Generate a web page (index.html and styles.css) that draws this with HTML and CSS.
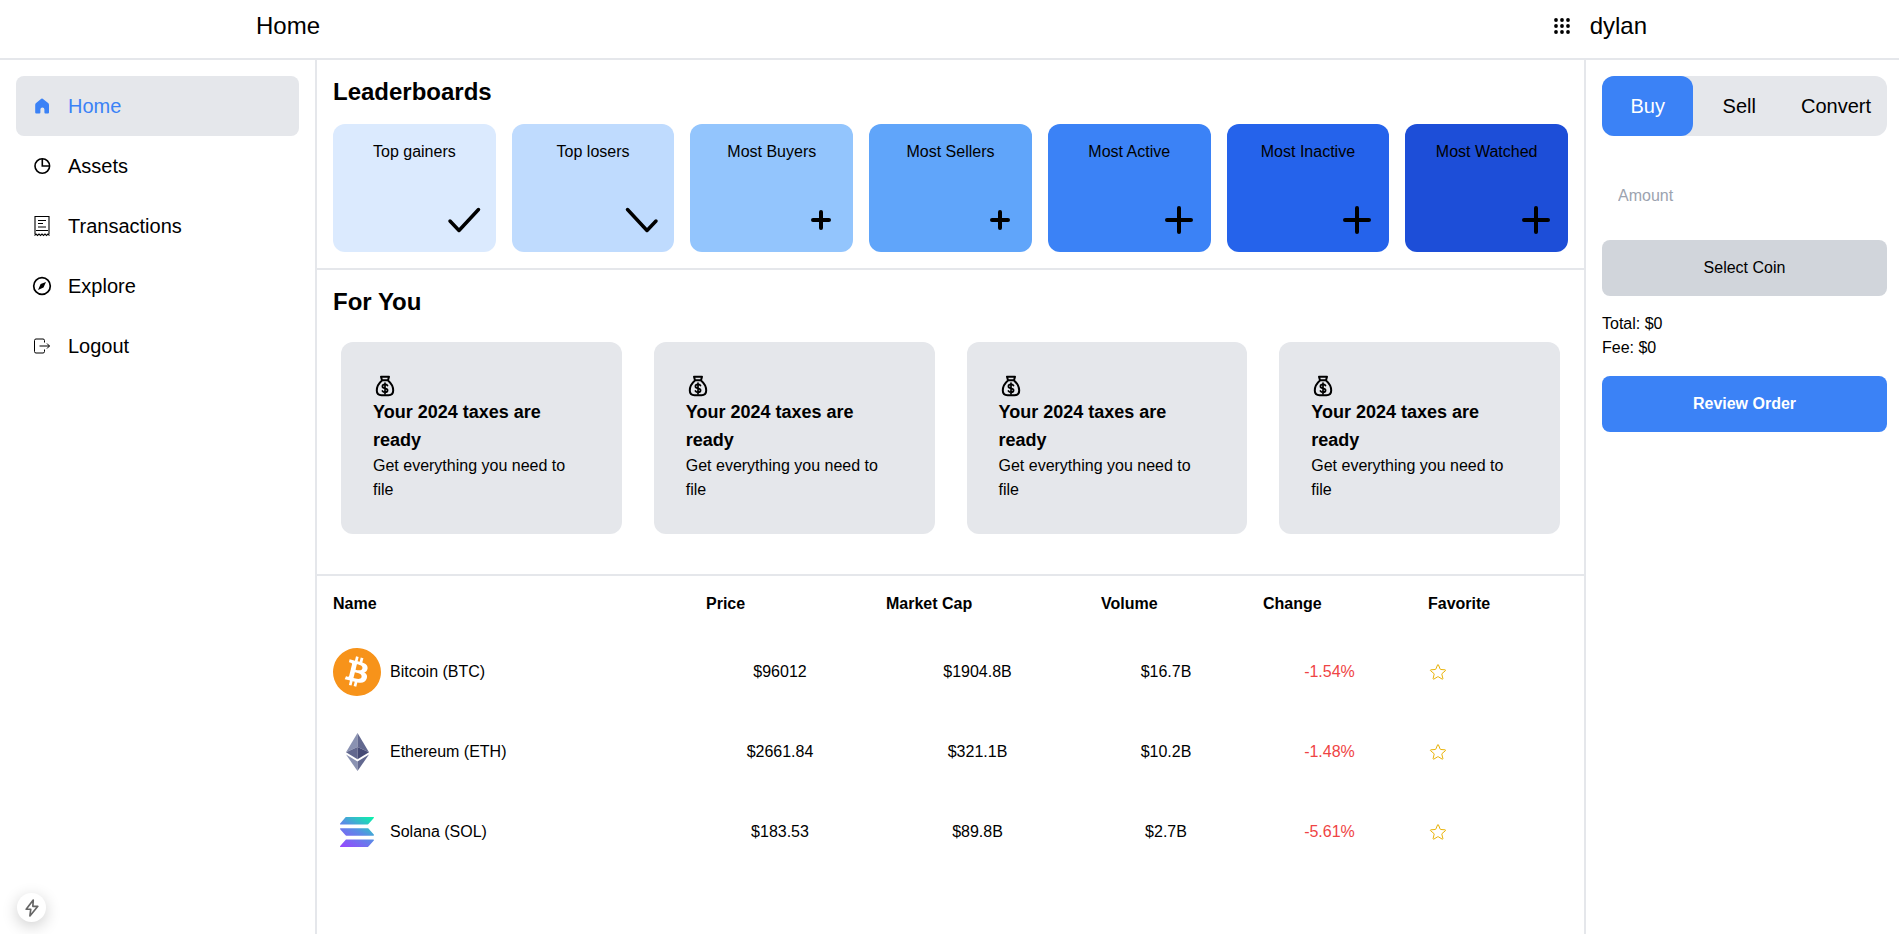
FILE: index.html
```html
<!DOCTYPE html>
<html lang="en">
<head>
    <meta charset="UTF-8">
    <meta name="viewport" content="width=device-width, initial-scale=1.0">
    <title>Home</title>
    <link rel="stylesheet" href="styles.css">
</head>
<body>
    <header class="topbar">
        <div class="topbar-title">Home</div>
        <div class="topbar-user">
            <svg class="apps-icon" viewBox="0 0 16 16" fill="#000">
                <circle cx="2" cy="2" r="1.9"/><circle cx="8" cy="2" r="1.9"/><circle cx="14" cy="2" r="1.9"/>
                <circle cx="2" cy="8" r="1.9"/><circle cx="8" cy="8" r="1.9"/><circle cx="14" cy="8" r="1.9"/>
                <circle cx="2" cy="14" r="1.9"/><circle cx="8" cy="14" r="1.9"/><circle cx="14" cy="14" r="1.9"/>
            </svg>
            <span>dylan</span>
        </div>
    </header>

    <div class="layout">
        <!-- Sidebar -->
        <nav class="sidebar">
            <a class="nav-link active">
                <svg class="nav-icon" viewBox="0 0 20 20" fill="#3b82f6"><path d="M9.3 2.8a1 1 0 0 1 1.4 0l5.4 4.3c.6.5.9 1.1.9 1.9V16.600a1 1 0 0 1-1 1h-2.600a1 1 0 0 1-1-1v-3.200a2 2 0 0 0-4 0v3.200a1 1 0 0 1-1 1H4.200a1 1 0 0 1-1-1V9c0-.8.3-1.4.9-1.9z"/></svg>
                <span>Home</span>
            </a>
            <a class="nav-link">
                <svg class="nav-icon" viewBox="0 0 20 20" fill="none" stroke="#000" stroke-width="1.6"><circle cx="10.300" cy="10" r="7.300"/><path d="M10.300 2.700V10h7.300"/></svg>
                <span>Assets</span>
            </a>
            <a class="nav-link">
                <svg class="nav-icon receipt-icon" viewBox="0 0 20 24" fill="none" stroke="#000" stroke-width="1.1"><path d="M3 20V2.500h14V20"/><path d="M6 6.500h8M6 9.500h5M6 13h8M4 16.500h12"/><path d="M2.500 21.500l1.500-1.500 1.500 1.500 1.500-1.500 1.500 1.500 1.500-1.500 1.500 1.500 1.500-1.500 1.500 1.500 1.500-1.500 1.500 1.500"/></svg>
                <span>Transactions</span>
            </a>
            <a class="nav-link">
                <svg class="nav-icon" viewBox="0 0 20 20" fill="none" stroke="#000" stroke-width="1.7"><circle cx="10" cy="10" r="8.300"/><path d="M14 6l-5.400 2.100L6 14l5.500-2.400z" fill="#000" stroke="none"/></svg>
                <span>Explore</span>
            </a>
            <a class="nav-link">
                <svg class="nav-icon" viewBox="0 0 20 20" fill="none" stroke="#000" stroke-width="1"><path d="M12.500 6.500V4.500a1.500 1.500 0 0 0-1.500-1.500H4A1.500 1.500 0 0 0 2.500 4.500v11A1.500 1.500 0 0 0 4 17h7a1.500 1.500 0 0 0 1.500-1.500v-2"/><path d="M7.500 10H17.500M15 7.500l2.500 2.500-2.500 2.500"/></svg>
                <span>Logout</span>
            </a>
        </nav>

        <main class="main">
            <!-- Leaderboards -->
            <section class="section">
                <h2>Leaderboards</h2>
                <div class="leaderboards">
                    <div class="board-card shade-1">
                        <span>Top gainers</span>
                        <svg class="board-icon" viewBox="0 0 48 48"><path d="M10 25l9 9.500L38.500 13.500"/></svg>
                    </div>
                    <div class="board-card shade-2">
                        <span>Top losers</span>
                        <svg class="board-icon" viewBox="0 0 48 48"><path d="M9.500 13.500L29 34.500l9-9.500"/></svg>
                    </div>
                    <div class="board-card shade-3">
                        <span>Most Buyers</span>
                        <svg class="board-icon bold" viewBox="0 0 48 48"><path d="M24 16v16M16 24h16"/></svg>
                    </div>
                    <div class="board-card shade-4">
                        <span>Most Sellers</span>
                        <svg class="board-icon bold" viewBox="0 0 48 48"><path d="M24 16v16M16 24h16"/></svg>
                    </div>
                    <div class="board-card shade-5">
                        <span>Most Active</span>
                        <svg class="board-icon bold" viewBox="0 0 48 48"><path d="M24 12v24M12 24h24"/></svg>
                    </div>
                    <div class="board-card shade-6">
                        <span>Most Inactive</span>
                        <svg class="board-icon bold" viewBox="0 0 48 48"><path d="M24 12v24M12 24h24"/></svg>
                    </div>
                    <div class="board-card shade-7">
                        <span>Most Watched</span>
                        <svg class="board-icon bold" viewBox="0 0 48 48"><path d="M24 12v24M12 24h24"/></svg>
                    </div>
                </div>
            </section>

            <!-- For You -->
            <section class="section">
                <h2>For You</h2>
                <div class="for-you">
                    <div class="tip-card">
                        <svg class="bag-icon" viewBox="0 0 24 24"><path d="M8 2.800h8l-1 3.400H9zM9 6.500C6 9 3.800 12.500 3.800 16.500c0 3 1.700 4.700 4.700 4.700h7c3 0 4.700-1.700 4.700-4.700 0-4-2.200-7.500-5.200-10"/><path class="thin" d="M14.500 11.500c-.6-.8-1.500-1.100-2.500-1.100-1.500 0-2.600.8-2.600 2 0 2.600 5.200 1.200 5.200 3.800 0 1.200-1.200 2-2.600 2-1.100 0-2-.4-2.600-1.200M12 9v11"/></svg>
                        <h3>Your 2024 taxes are ready</h3>
                        <p>Get everything you need to file</p>
                    </div>
                    <div class="tip-card">
                        <svg class="bag-icon" viewBox="0 0 24 24"><path d="M8 2.800h8l-1 3.400H9zM9 6.500C6 9 3.800 12.500 3.800 16.500c0 3 1.700 4.700 4.700 4.700h7c3 0 4.700-1.700 4.700-4.700 0-4-2.200-7.500-5.200-10"/><path class="thin" d="M14.500 11.500c-.6-.8-1.500-1.100-2.500-1.100-1.500 0-2.600.8-2.600 2 0 2.600 5.200 1.200 5.200 3.800 0 1.200-1.200 2-2.600 2-1.100 0-2-.4-2.600-1.200M12 9v11"/></svg>
                        <h3>Your 2024 taxes are ready</h3>
                        <p>Get everything you need to file</p>
                    </div>
                    <div class="tip-card">
                        <svg class="bag-icon" viewBox="0 0 24 24"><path d="M8 2.800h8l-1 3.400H9zM9 6.500C6 9 3.800 12.500 3.800 16.500c0 3 1.700 4.700 4.700 4.700h7c3 0 4.700-1.700 4.700-4.700 0-4-2.200-7.500-5.200-10"/><path class="thin" d="M14.500 11.500c-.6-.8-1.500-1.100-2.500-1.100-1.500 0-2.600.8-2.600 2 0 2.600 5.200 1.200 5.200 3.800 0 1.200-1.200 2-2.600 2-1.100 0-2-.4-2.600-1.200M12 9v11"/></svg>
                        <h3>Your 2024 taxes are ready</h3>
                        <p>Get everything you need to file</p>
                    </div>
                    <div class="tip-card">
                        <svg class="bag-icon" viewBox="0 0 24 24"><path d="M8 2.800h8l-1 3.400H9zM9 6.500C6 9 3.800 12.500 3.800 16.500c0 3 1.700 4.700 4.700 4.700h7c3 0 4.700-1.700 4.700-4.700 0-4-2.200-7.500-5.200-10"/><path class="thin" d="M14.500 11.500c-.6-.8-1.500-1.100-2.500-1.100-1.500 0-2.600.8-2.600 2 0 2.600 5.200 1.200 5.200 3.800 0 1.200-1.200 2-2.600 2-1.100 0-2-.4-2.600-1.200M12 9v11"/></svg>
                        <h3>Your 2024 taxes are ready</h3>
                        <p>Get everything you need to file</p>
                    </div>
                </div>
            </section>

            <!-- Coins -->
            <section class="coins">
                <table>
                    <thead>
                        <tr>
                            <th class="col-name">Name</th>
                            <th class="col-price">Price</th>
                            <th class="col-cap">Market Cap</th>
                            <th class="col-volume">Volume</th>
                            <th class="col-change">Change</th>
                            <th class="col-fav">Favorite</th>
                        </tr>
                    </thead>
                    <tbody>
                        <tr>
                            <td>
                                <div class="coin">
                                    <div class="coin-icon">
                                        <svg class="btc-logo" viewBox="0 0 64 64"><path fill="#f7931a" d="M63.04 39.741c-4.274 17.143-21.638 27.575-38.783 23.301C7.12 58.768-3.313 41.404.962 24.262 5.234 7.117 22.597-3.317 39.737.957c17.144 4.274 27.576 21.64 23.302 38.784z"/><path fill="#fff" d="M46.11 27.441c.636-4.258-2.606-6.547-7.039-8.074l1.438-5.768-3.512-.875-1.4 5.616c-.922-.23-1.87-.447-2.812-.662l1.41-5.653-3.509-.875-1.439 5.766c-.764-.174-1.514-.346-2.242-.527l.004-.018-4.842-1.209-.934 3.75s2.605.597 2.55.634c1.422.355 1.68 1.296 1.636 2.042l-1.638 6.571c.098.025.225.061.365.117l-.37-.092-2.297 9.205c-.174.432-.615 1.08-1.609.834.035.051-2.552-.637-2.552-.637l-1.743 4.02 4.57 1.139c.85.213 1.683.436 2.502.646l-1.453 5.835 3.507.875 1.44-5.772c.957.26 1.887.5 2.797.726L27.504 50.8l3.511.875 1.453-5.823c5.987 1.133 10.49.676 12.383-4.738 1.527-4.36-.075-6.875-3.225-8.516 2.294-.531 4.022-2.04 4.483-5.157zM38.087 38.69c-1.086 4.36-8.426 2.004-10.807 1.412l1.928-7.729c2.38.594 10.011 1.77 8.88 6.317zm1.085-11.312c-.99 3.966-7.1 1.951-9.083 1.457l1.748-7.01c1.983.494 8.367 1.416 7.335 5.553z"/></svg>
                                    </div>
                                    <span>Bitcoin (BTC)</span>
                                </div>
                            </td>
                            <td>$96012</td>
                            <td>$1904.8B</td>
                            <td>$16.7B</td>
                            <td class="down">-1.54%</td>
                            <td class="fav"><svg class="star" viewBox="0 0 24 24"><path d="M11.48 3.499a.562.562 0 0 1 1.04 0l2.125 5.111a.563.563 0 0 0 .475.345l5.518.442c.499.04.701.663.321.988l-4.204 3.602a.563.563 0 0 0-.182.557l1.285 5.385a.562.562 0 0 1-.84.61l-4.725-2.885a.562.562 0 0 0-.586 0L6.982 20.54a.562.562 0 0 1-.84-.61l1.285-5.386a.562.562 0 0 0-.182-.557l-4.204-3.602a.562.562 0 0 1 .321-.988l5.518-.442a.563.563 0 0 0 .475-.345L11.48 3.5z"/></svg></td>
                        </tr>
                        <tr>
                            <td>
                                <div class="coin">
                                    <div class="coin-icon">
                                        <svg class="eth-logo" viewBox="0 0 256 417" preserveAspectRatio="none">
                                            <polygon fill="#8a92b2" points="128,0 0,212.500 128,154"/>
                                            <polygon fill="#62688f" points="128,0 128,154 256,212.500"/>
                                            <polygon fill="#62688f" points="0,212.500 128,288 128,154"/>
                                            <polygon fill="#454a75" points="128,154 128,288 256,212.500"/>
                                            <polygon fill="#8a92b2" points="0,237 128,417 128,312"/>
                                            <polygon fill="#62688f" points="128,312 128,417 256,237"/>
                                        </svg>
                                    </div>
                                    <span>Ethereum (ETH)</span>
                                </div>
                            </td>
                            <td>$2661.84</td>
                            <td>$321.1B</td>
                            <td>$10.2B</td>
                            <td class="down">-1.48%</td>
                            <td class="fav"><svg class="star" viewBox="0 0 24 24"><path d="M11.48 3.499a.562.562 0 0 1 1.04 0l2.125 5.111a.563.563 0 0 0 .475.345l5.518.442c.499.04.701.663.321.988l-4.204 3.602a.563.563 0 0 0-.182.557l1.285 5.385a.562.562 0 0 1-.84.61l-4.725-2.885a.562.562 0 0 0-.586 0L6.982 20.54a.562.562 0 0 1-.84-.61l1.285-5.386a.562.562 0 0 0-.182-.557l-4.204-3.602a.562.562 0 0 1 .321-.988l5.518-.442a.563.563 0 0 0 .475-.345L11.48 3.5z"/></svg></td>
                        </tr>
                        <tr>
                            <td>
                                <div class="coin">
                                    <div class="coin-icon">
                                        <svg class="sol-logo" viewBox="0 0 398 312" preserveAspectRatio="none">
                                            <defs>
                                                <linearGradient id="sol-grad" gradientUnits="userSpaceOnUse" x1="360.900" y1="-37.500" x2="141.200" y2="383">
                                                    <stop offset="0" stop-color="#00ffa3"/>
                                                    <stop offset="0.5" stop-color="#5a8be6"/>
                                                    <stop offset="1" stop-color="#9945ff"/>
                                                </linearGradient>
                                            </defs>
                                            <path fill="url(#sol-grad)" d="M64.600 237.900c2.400-2.400 5.700-3.800 9.200-3.800h317.400c5.800 0 8.700 7 4.600 11.100l-62.700 62.700c-2.400 2.400-5.700 3.800-9.200 3.800H6.500c-5.800 0-8.700-7-4.600-11.100l62.700-62.700z"/>
                                            <path fill="url(#sol-grad)" d="M64.600 3.800C67.100 1.400 70.400 0 73.800 0h317.400c5.800 0 8.700 7 4.600 11.100l-62.700 62.700c-2.400 2.400-5.700 3.800-9.200 3.800H6.500c-5.800 0-8.700-7-4.600-11.100L64.600 3.800z"/>
                                            <path fill="url(#sol-grad)" d="M333.100 120.100c-2.400-2.400-5.700-3.800-9.200-3.800H6.500c-5.800 0-8.700 7-4.600 11.100l62.700 62.700c2.400 2.400 5.700 3.800 9.200 3.800h317.400c5.800 0 8.700-7 4.600-11.100l-62.700-62.700z"/>
                                        </svg>
                                    </div>
                                    <span>Solana (SOL)</span>
                                </div>
                            </td>
                            <td>$183.53</td>
                            <td>$89.8B</td>
                            <td>$2.7B</td>
                            <td class="down">-5.61%</td>
                            <td class="fav"><svg class="star" viewBox="0 0 24 24"><path d="M11.48 3.499a.562.562 0 0 1 1.04 0l2.125 5.111a.563.563 0 0 0 .475.345l5.518.442c.499.04.701.663.321.988l-4.204 3.602a.563.563 0 0 0-.182.557l1.285 5.385a.562.562 0 0 1-.84.61l-4.725-2.885a.562.562 0 0 0-.586 0L6.982 20.54a.562.562 0 0 1-.84-.61l1.285-5.386a.562.562 0 0 0-.182-.557l-4.204-3.602a.562.562 0 0 1 .321-.988l5.518-.442a.563.563 0 0 0 .475-.345L11.48 3.5z"/></svg></td>
                        </tr>
                    </tbody>
                </table>
            </section>
        </main>

        <!-- Trade panel -->
        <aside class="trade">
            <div class="trade-tabs">
                <div class="trade-tab active">Buy</div>
                <div class="trade-tab">Sell</div>
                <div class="trade-tab">Convert</div>
            </div>
            <input class="amount" type="text" placeholder="Amount">
            <button class="select-coin">Select Coin</button>
            <div class="summary">
                <div>Total: $0</div>
                <div>Fee: $0</div>
            </div>
            <button class="review">Review Order</button>
        </aside>
    </div>

    <div class="dev-badge">
        <svg viewBox="0 0 24 24" fill="none" stroke="#666" stroke-width="2" stroke-linejoin="round"><path d="M13.500 2.500L5 13.500h5.500l-1 8L19 10h-6z"/></svg>
    </div>
</body>
</html>
```

FILE: styles.css
```css
* {
    margin: 0;
    padding: 0;
    box-sizing: border-box;
    font-family: "Liberation Sans", Arial, sans-serif;
}
body {
    height: 100vh;
    overflow: hidden;
    display: flex;
    flex-direction: column;
    background: #fff;
    color: #000;
    font-size: 16px;
    line-height: 24px;
}

/* Top bar */
.topbar {
    height: 60px;
    flex-shrink: 0;
    display: flex;
    justify-content: space-between;
    align-items: center;
    padding: 0 252px 6px 256px;
    border-bottom: 2px solid #e5e7eb;
    font-size: 24px;
}
.topbar-user {
    display: flex;
    align-items: center;
    gap: 20px;
}
.apps-icon {
    width: 16px;
    height: 16px;
}

.layout {
    flex: 1;
    display: flex;
    min-height: 0;
}

/* Sidebar */
.sidebar {
    width: 317px;
    flex-shrink: 0;
    padding: 16px;
    border-right: 2px solid #e5e7eb;
}
.nav-link {
    height: 60px;
    display: flex;
    align-items: center;
    gap: 16px;
    padding: 0 16px;
    border-radius: 8px;
    font-size: 20px;
}
.nav-link.active {
    background: #e5e7eb;
    color: #3b82f6;
}
.nav-icon {
    width: 20px;
    height: 20px;
    flex-shrink: 0;
}
.receipt-icon {
    height: 24px;
}

/* Main column */
.main {
    flex: 1;
    min-width: 0;
}
.section {
    padding: 16px;
    border-bottom: 2px solid #e5e7eb;
}
h2 {
    font-size: 24px;
    line-height: 32px;
    font-weight: 700;
}
.leaderboards {
    display: grid;
    grid-template-columns: repeat(7, 1fr);
    gap: 16px;
    margin-top: 16px;
}
.board-card {
    height: 128px;
    display: flex;
    flex-direction: column;
    align-items: center;
    padding: 16px 8px 8px;
    border-radius: 12px;
}
.board-icon {
    width: 48px;
    height: 48px;
    margin-top: auto;
    align-self: flex-end;
    fill: none;
    stroke: #000;
    stroke-width: 3.5;
    stroke-linecap: round;
    stroke-linejoin: round;
}
.board-icon.bold {
    stroke-width: 4;
}
.shade-1 { background: #dbeafe; }
.shade-2 { background: #bfdbfe; }
.shade-3 { background: #93c5fd; }
.shade-4 { background: #60a5fa; }
.shade-5 { background: #3b82f6; }
.shade-6 { background: #2563eb; }
.shade-7 { background: #1d4ed8; }

.for-you {
    display: grid;
    grid-template-columns: repeat(4, 1fr);
    gap: 32px;
    padding: 24px 8px;
}
.tip-card {
    height: 192px;
    padding: 32px;
    border-radius: 12px;
    background: #e5e7eb;
}
.bag-icon {
    display: block;
    width: 24px;
    height: 24px;
    fill: none;
    stroke: #000;
    stroke-width: 2;
    stroke-linejoin: round;
    stroke-linecap: round;
}
.bag-icon .thin {
    stroke-width: 1.7;
}
.tip-card h3 {
    font-size: 18px;
    line-height: 28px;
    font-weight: 700;
}

/* Coin table */
.coins {
    padding: 16px;
}
table {
    width: 100%;
    table-layout: fixed;
    border-collapse: collapse;
}
th {
    padding: 0 16px 16px;
    font-weight: 700;
    text-align: left;
}
td {
    height: 80px;
    padding: 0 16px;
    text-align: center;
}
th:first-child,
td:first-child {
    padding-left: 0;
}
.col-name { width: 357px; }
.col-price { width: 180px; }
.col-cap { width: 215px; }
.col-volume { width: 162px; }
.col-change { width: 165px; }
.col-fav { width: 156px; }
.coin {
    display: flex;
    align-items: center;
    gap: 9px;
    text-align: left;
}
.coin-icon {
    width: 48px;
    height: 48px;
    display: flex;
    justify-content: center;
    align-items: center;
}
.btc-logo {
    width: 48px;
    height: 48px;
}
.eth-logo {
    width: 23px;
    height: 38px;
}
.sol-logo {
    width: 34px;
    height: 30px;
}
.down {
    color: #ef4444;
}
td.fav {
    text-align: left;
}
.star {
    display: block;
    width: 20px;
    height: 20px;
    fill: none;
    stroke: #eab308;
    stroke-width: 1.2;
}

/* Trade panel */
.trade {
    width: 315px;
    flex-shrink: 0;
    display: flex;
    flex-direction: column;
    gap: 16px;
    padding: 16px 12px 16px 16px;
    border-left: 2px solid #e5e7eb;
}
.trade-tabs {
    display: flex;
    height: 60px;
    border-radius: 12px;
    background: #e5e7eb;
    margin-bottom: 16px;
}
.trade-tab {
    flex: 1;
    display: flex;
    justify-content: center;
    align-items: center;
    padding: 0 16px;
    border-radius: 12px;
    font-size: 20px;
}
.trade-tab.active {
    background: #3b82f6;
    color: #fff;
}
.amount {
    height: 56px;
    padding: 0 16px;
    border: none;
    outline: none;
    background: transparent;
    font-size: 16px;
}
.amount::placeholder {
    color: #9ca3af;
}
button {
    height: 56px;
    border: none;
    border-radius: 8px;
    font-size: 16px;
    cursor: pointer;
}
.select-coin {
    background: #d1d5db;
    color: #000;
}
.review {
    background: #3b82f6;
    color: #fff;
    font-weight: 700;
}

.dev-badge {
    position: fixed;
    left: 17px;
    bottom: 12px;
    width: 29px;
    height: 29px;
    display: flex;
    justify-content: center;
    align-items: center;
    border-radius: 50%;
    background: #fff;
    box-shadow: 0 4px 16px rgba(0, 0, 0, 0.2);
}
.dev-badge svg {
    width: 20px;
    height: 20px;
}
```
